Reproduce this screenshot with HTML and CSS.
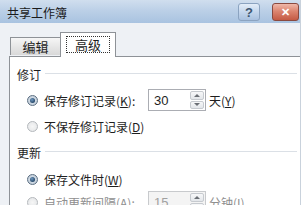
FILE: index.html
```html
<!DOCTYPE html>
<html lang="zh-CN">
<head>
    <meta charset="UTF-8">
    <title>共享工作簿</title>
    <link rel="stylesheet" href="styles.css">
</head>
<body>
    <div class="dialog">
        <div class="titlebar">
            <span class="title">共享工作簿</span>
            <div class="title-buttons">
                <span class="btn-help">?</span>
                <span class="btn-close">&#x2715;</span>
            </div>
        </div>
        <div class="content">
            <div class="tabs">
                <div class="tab">编辑</div>
                <div class="tab active"><span class="focus">高级</span></div>
            </div>
            <div class="panel">
                <div class="group-head"><span>修订</span><i class="rule"></i></div>
                <div class="row">
                    <span class="radio checked"></span>
                    <span class="label">保存修订记录(<u>K</u>):</span>
                    <div class="spinner">
                        <span class="value">30</span>
                        <span class="spin"><b class="up"></b><b class="down"></b></span>
                    </div>
                    <span class="unit">天(<u>Y</u>)</span>
                </div>
                <div class="row">
                    <span class="radio"></span>
                    <span>不保存修订记录(<u>D</u>)</span>
                </div>
                <div class="group-head second"><span>更新</span><i class="rule"></i></div>
                <div class="row">
                    <span class="radio checked"></span>
                    <span>保存文件时(<u>W</u>)</span>
                </div>
                <div class="row last">
                    <span class="radio"></span>
                    <span class="label">自动更新间隔(<u>A</u>):</span>
                    <div class="spinner disabled">
                        <span class="value">15</span>
                        <span class="spin"><b class="up"></b><b class="down"></b></span>
                    </div>
                    <span class="unit">分钟(<u>I</u>)</span>
                </div>
            </div>
        </div>
    </div>
</body>
</html>
```

FILE: styles.css
```css
body {
    margin: 0;
    background: #fff;
    font-family: "Noto Sans CJK SC", "Liberation Sans", sans-serif;
    font-size: 12px;
    color: #1e1e1e;
    overflow: hidden;
}

.dialog {
    width: 300px;
    height: 205px;
    background: #eef1f5;
    border-right: 1px solid #c9d2dc;
    overflow: hidden;
}

.titlebar {
    height: 23px;
    background: linear-gradient(180deg, #d0deee 0%, #bcd0e7 45%, #a9c3e0 100%);
    display: flex;
    align-items: flex-start;
    justify-content: space-between;
    padding-left: 7px;
}

.title {
    line-height: 26px;
    font-size: 12px;
    color: #1a1a1a;
}

.title-buttons {
    display: flex;
    gap: 12px;
    margin-top: 3px;
    margin-right: 1px;
}

.btn-help,
.btn-close {
    height: 16px;
    border-radius: 3px;
    display: flex;
    align-items: center;
    justify-content: center;
    font-family: "Liberation Sans", sans-serif;
    font-weight: bold;
}

.btn-help {
    width: 20px;
    border: 1px solid #8ba3c0;
    background: linear-gradient(180deg, #e3edf8 0%, #c4d6ec 50%, #a9c1df 100%);
    color: #3d556f;
    font-size: 13px;
}

.btn-close {
    width: 25px;
    border: 1px solid #8a4a40;
    background: linear-gradient(180deg, #efb8aa 0%, #dc8570 45%, #c45a44 100%);
    color: #fff;
    font-size: 11px;
}

.content {
    padding: 9px 0 0 9px;
}

.tabs {
    display: flex;
    align-items: flex-end;
    padding-left: 1px;
    position: relative;
    z-index: 1;
}

.tab {
    width: 51px;
    height: 18px;
    border: 1px solid #8e9297;
    border-bottom: none;
    background: linear-gradient(180deg, #f6f6f6 0%, #e4e4e4 60%, #d9d9d9 100%);
    display: flex;
    align-items: center;
    justify-content: center;
    box-sizing: border-box;
    margin-bottom: 1px;
    font-size: 13px;
}

.tab.active {
    width: 56px;
    height: 25px;
    background: #fff;
    margin-bottom: -1px;
    margin-left: -1px;
    padding-bottom: 1px;
}

.focus {
    border: 1px dotted #333;
    padding: 0 8px;
    line-height: 15px;
}

.panel {
    width: 285px;
    height: 160px;
    border: 1px solid #8e9297;
    background: #fff;
    padding: 9px 0 0 7px;
}

.group-head {
    display: flex;
    align-items: center;
    height: 16px;
    margin-bottom: 5px;
}

.group-head.second {
    margin-top: 5px;
    margin-bottom: 6px;
}

.rule {
    flex: 1;
    height: 1px;
    background: #dbe0e6;
    margin: -2px 5px 0 4px;
}

.row {
    display: flex;
    align-items: center;
    height: 26px;
    padding-left: 10px;
}

.row.last {
    margin-top: -3px;
    color: #8f8f8f;
}

.radio {
    width: 11px;
    height: 11px;
    border-radius: 50%;
    border: 1px solid #b4b8bc;
    background: radial-gradient(circle, #f6f6f6 0%, #e2e4e6 100%);
    box-sizing: border-box;
    margin-right: 6px;
    display: flex;
    align-items: center;
    justify-content: center;
}

.radio.checked {
    border-color: #5c6f82;
    background: radial-gradient(circle, #dfe7ef 0%, #b9c6d3 100%);
}

.radio.checked::after {
    content: '';
    width: 5px;
    height: 5px;
    border-radius: 50%;
    background: radial-gradient(circle at 40% 35%, #6f98c0 0%, #1d3e5e 80%);
}

.label {
    width: 104px;
}

.spinner {
    width: 58px;
    height: 22px;
    border: 1px solid #abadb3;
    box-sizing: border-box;
    display: flex;
    align-items: center;
    justify-content: space-between;
    font-family: "Liberation Sans", sans-serif;
    font-size: 13px;
    color: #1e1e1e;
}

.spinner .value {
    padding-left: 5px;
}

.spin {
    width: 14px;
    height: 18px;
    margin-right: 1px;
    display: flex;
    flex-direction: column;
    gap: 1px;
}

.spin b {
    flex: 1;
    border: 1px solid #c6cacf;
    border-radius: 2px;
    background: linear-gradient(180deg, #f7f8f9 0%, #e3e6ea 100%);
    display: flex;
    align-items: center;
    justify-content: center;
}

.spin .up::after,
.spin .down::after {
    content: '';
    border-left: 3px solid transparent;
    border-right: 3px solid transparent;
}

.spin .up::after {
    border-bottom: 3px solid #6b6f75;
}

.spin .down::after {
    border-top: 3px solid #6b6f75;
}

.spinner.disabled {
    color: #a0a0a0;
    border-color: #c8cacd;
    background: #f4f4f4;
}

.unit {
    margin-left: 3px;
}
```
